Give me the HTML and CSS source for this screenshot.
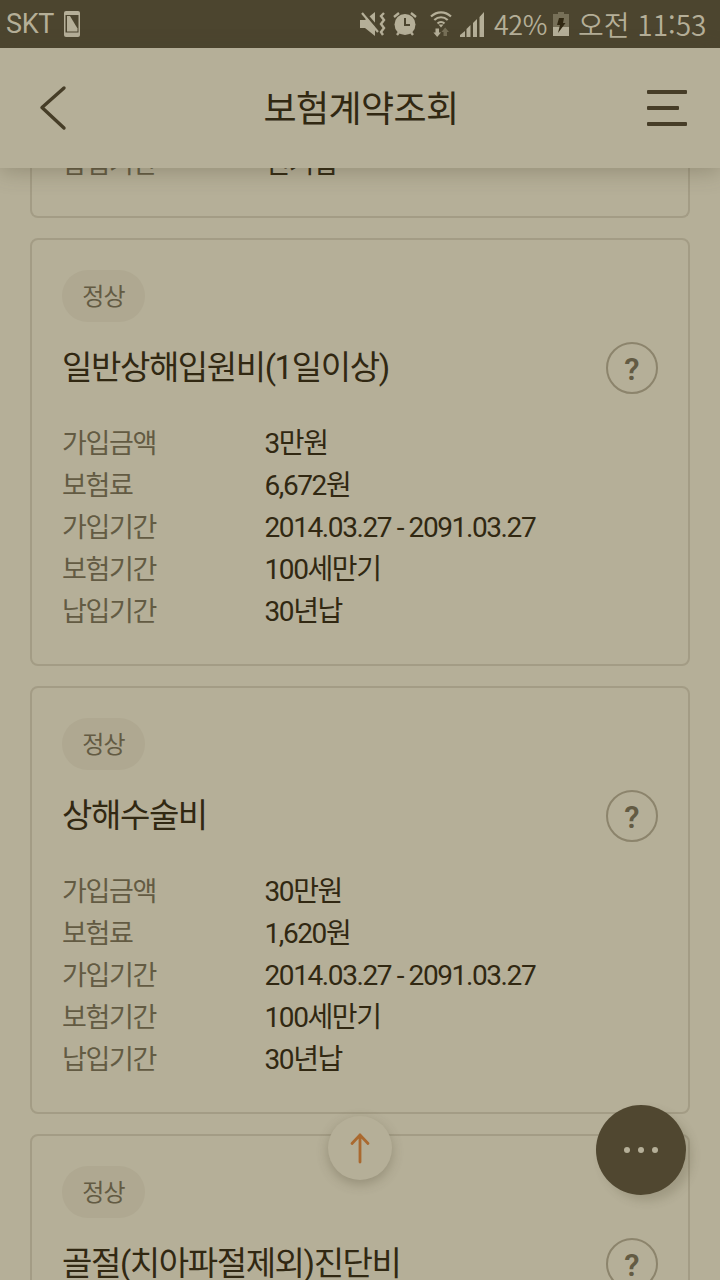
FILE: index.html
```html
<!DOCTYPE html>
<html lang="ko">
<head>
    <meta charset="UTF-8">
    <meta name="viewport" content="width=device-width, initial-scale=1.0">
    <title>보험계약조회</title>
    <link rel="stylesheet" href="styles.css">
</head>
<body>
    <div class="status-bar">
        <span class="carrier">SKT</span>
        <svg class="sim-icon" width="18" height="26" viewBox="0 0 18 26">
            <rect x="1" y="0" width="16" height="26" rx="2" fill="#b5af98"/>
            <rect x="2.5" y="4" width="13" height="17.5" fill="#4c452f"/>
            <path d="M4 5v15.500h10.500v-3L7 5z" fill="#b5af98"/>
        </svg>
        <div class="status-icons">
            <svg class="mute-icon" width="26" height="24" viewBox="0 0 26 24">
                <path d="M0 8h5l10-8v24L5 16H0z" fill="#b5af98"/>
                <path d="M3-1L21 20" stroke="#4c452f" stroke-width="3"/>
                <path d="M2 1L18 20" stroke="#b5af98" stroke-width="2.200"/>
                <path d="M24 1l-3 3 3 4-3 4 3 4-3 4 2 3" fill="none" stroke="#b5af98" stroke-width="2.400"/>
            </svg>
            <svg class="alarm-icon" width="24" height="24" viewBox="0 0 24 24">
                <circle cx="12" cy="12.500" r="10.500" fill="#b5af98"/>
                <path d="M1 5l5-4M23 5l-5-4M4 23l3-4M20 23l-3-4" stroke="#b5af98" stroke-width="2.400"/>
                <path d="M12 6v7h5" fill="none" stroke="#4c452f" stroke-width="2"/>
            </svg>
            <svg class="wifi-icon" width="22" height="26" viewBox="0 0 22 26">
                <path d="M1 5.500c6-5.600 14-5.600 20 0M4.300 9c4-3.700 9.400-3.700 13.400 0M7.500 12.500c2-1.800 5-1.800 7 0" fill="none" stroke="#b5af98" stroke-width="2.200"/>
                <path d="M8.500 13.500h5L11 16.500z" fill="#b5af98"/>
                <path d="M5.500 17.500h3.500v4h2L7.200 26l-3.800-4.500h2.100z" fill="#b5af98"/>
                <path d="M13.500 25H17v-4h2l-3.800-4.500-3.800 4.500h2.100z" fill="#777058"/>
            </svg>
            <svg class="signal-icon" width="25" height="25" viewBox="0 0 25 25">
                <path d="M0 25v-2l5-4v6zM6.500 25v-8l4-4v12zM13 25V11l4-4v18zM19.500 25V5L24 0v25z" fill="#b5af98"/>
            </svg>
            <span class="percent">42%</span>
            <svg class="battery-icon" width="16" height="24" viewBox="0 0 16 24">
                <path d="M0 2h5V0h6v2h5v13H0z" fill="#777058"/>
                <path d="M0 15h16v9H0z" fill="#b5af98"/>
                <path d="M6 6h5l-1 5h2.500L5 21l2-8H4z" fill="#312812"/>
            </svg>
            <span class="clock">오전 11:53</span>
        </div>
    </div>

    <header>
        <svg width="30" height="46" viewBox="0 0 30 46">
            <path d="M27 3L5 22.500 27 43" fill="none" stroke="#463d27" stroke-width="3.400" stroke-linecap="round" stroke-linejoin="round"/>
        </svg>
        <h1>보험계약조회</h1>
        <div class="menu">
            <span></span>
            <span class="short"></span>
            <span></span>
        </div>
    </header>

    <main>
        <section class="card card-cut">
            <dl>
                <dt>납입기간</dt><dd>전기납</dd>
            </dl>
        </section>

        <section class="card">
            <span class="badge">정상</span>
            <div class="card-title">
                <h2>일반상해입원비(1일이상)</h2>
                <span class="help">?</span>
            </div>
            <dl>
                <dt>가입금액</dt><dd>3만원</dd>
                <dt>보험료</dt><dd>6,672원</dd>
                <dt>가입기간</dt><dd>2014.03.27 - 2091.03.27</dd>
                <dt>보험기간</dt><dd>100세만기</dd>
                <dt>납입기간</dt><dd>30년납</dd>
            </dl>
        </section>

        <section class="card">
            <span class="badge">정상</span>
            <div class="card-title">
                <h2>상해수술비</h2>
                <span class="help">?</span>
            </div>
            <dl>
                <dt>가입금액</dt><dd>30만원</dd>
                <dt>보험료</dt><dd>1,620원</dd>
                <dt>가입기간</dt><dd>2014.03.27 - 2091.03.27</dd>
                <dt>보험기간</dt><dd>100세만기</dd>
                <dt>납입기간</dt><dd>30년납</dd>
            </dl>
        </section>

        <section class="card">
            <span class="badge">정상</span>
            <div class="card-title">
                <h2>골절(치아파절제외)진단비</h2>
                <span class="help">?</span>
            </div>
        </section>
    </main>

    <div class="top-button">
        <svg width="22" height="32" viewBox="0 0 22 32">
            <path d="M11 30V3M3 11.500L11 3l8 8.500" fill="none" stroke="#aa692f" stroke-width="2.800" stroke-linecap="round" stroke-linejoin="round"/>
        </svg>
    </div>
    <div class="more-button">
        <i></i><i></i><i></i>
    </div>
</body>
</html>
```
FILE: styles.css
```css
* {
    box-sizing: border-box;
}
body {
    margin: 0;
    width: 720px;
    height: 1280px;
    display: flex;
    flex-direction: column;
    overflow: hidden;
    position: relative;
    background-color: #b5af98;
    color: #312812;
    font-family: Roboto, "Noto Sans CJK KR", sans-serif;
}
.status-bar {
    flex: none;
    display: flex;
    align-items: center;
    height: 48px;
    padding: 0 14px 0 6px;
    background-color: #4c452f;
    color: #b5af98;
    font-size: 27px;
    line-height: 48px;
}
.carrier {
    font-size: 27px;
    letter-spacing: -0.4px;
}
.sim-icon {
    margin-left: 9px;
}
.status-icons {
    display: flex;
    align-items: center;
    margin-left: auto;
}
.mute-icon {
    margin-left: -1px;
}
.alarm-icon {
    margin-left: 7px;
}
.wifi-icon {
    margin-left: 13px;
}
.signal-icon {
    margin-left: 8px;
}
.percent {
    width: 53px;
    margin-left: 9px;
    font-family: "Noto Sans CJK KR", sans-serif;
    font-weight: 350;
    letter-spacing: -0.5px;
}
.battery-icon {
    margin-left: 6px;
}
.clock {
    width: 128px;
    margin-left: 9px;
    font-family: "Noto Sans CJK KR", sans-serif;
    font-size: 28px;
    font-weight: 350;
    white-space: nowrap;
}
header {
    flex: none;
    display: flex;
    justify-content: space-between;
    align-items: center;
    height: 120px;
    padding: 0 33px 0 37px;
    background-color: #b5af98;
    box-shadow: 0 4px 20px rgba(76, 69, 47, 0.3);
    z-index: 1;
}
h1 {
    margin: 0 0 4px 8px;
    font-size: 36px;
    font-weight: 400;
    letter-spacing: -0.6px;
}
.menu {
    display: flex;
    flex-direction: column;
    gap: 12px;
    width: 40px;
}
.menu span {
    height: 4px;
    border-radius: 1px;
    background-color: #463d27;
}
.menu .short {
    width: 32px;
}
main {
    flex: 1;
    min-height: 0;
    overflow: hidden;
    display: flex;
    flex-direction: column;
    gap: 20px;
    padding: 0 30px;
}
.card {
    flex: none;
    height: 428px;
    padding: 30px;
    border: 2px solid #a39c85;
    border-radius: 8px;
}
.card-cut {
    height: 75px;
    margin-top: -25px;
    padding-top: 0;
    border-top: none;
    border-radius: 0 0 8px 8px;
}
.card-cut dl {
    margin-top: 0;
}
.badge {
    display: block;
    width: 83px;
    height: 52px;
    border-radius: 26px;
    background-color: #afa891;
    color: #635b43;
    font-size: 24px;
    line-height: 54px;
    letter-spacing: -0.8px;
    text-align: center;
}
.card-title {
    display: flex;
    justify-content: space-between;
    align-items: center;
    margin-top: 20px;
    height: 52px;
}
h2 {
    margin: 0 0 7px;
    font-size: 33px;
    font-weight: 400;
    letter-spacing: -1.4px;
}
.help {
    width: 52px;
    height: 52px;
    border: 2px solid #8c846c;
    border-radius: 50%;
    color: #635b43;
    font-size: 31px;
    font-weight: 600;
    line-height: 51px;
    text-align: center;
}
dl {
    display: grid;
    grid-template-columns: 202.5px 1fr;
    margin: 29px 0 0;
    line-height: 42px;
}
dt {
    color: #635b43;
    font-size: 27px;
    letter-spacing: -1.3px;
}
dd {
    margin: 0;
    font-size: 28px;
    letter-spacing: -1.4px;
}
.top-button {
    position: absolute;
    left: 328px;
    top: 1116px;
    display: flex;
    align-items: center;
    justify-content: center;
    width: 64px;
    height: 64px;
    border-radius: 50%;
    background-color: #b5af98;
    box-shadow: 0 4px 12px rgba(76, 69, 47, 0.3);
}
.more-button {
    position: absolute;
    left: 596px;
    top: 1105px;
    display: flex;
    align-items: center;
    justify-content: center;
    gap: 8px;
    width: 90px;
    height: 90px;
    border-radius: 50%;
    background-color: #504730;
    box-shadow: 6px 6px 10px rgba(76, 69, 47, 0.2);
}
.more-button i {
    width: 6px;
    height: 6px;
    border-radius: 50%;
    background-color: #b5af98;
}
```
